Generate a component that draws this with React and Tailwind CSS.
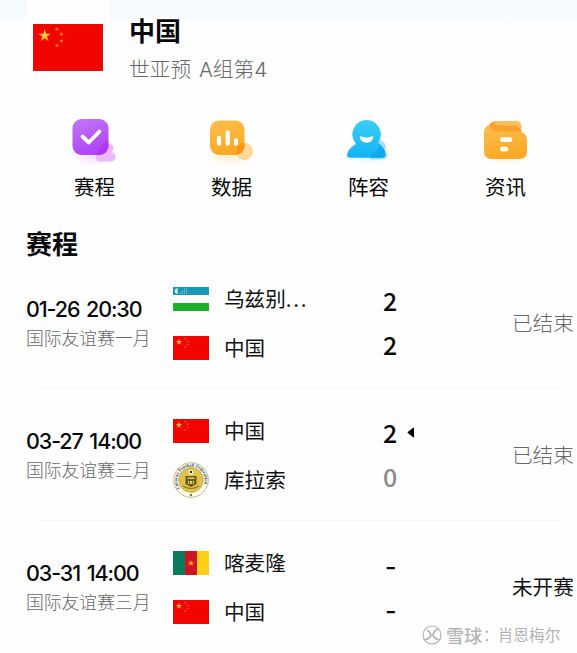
const STAR = '0,-1 0.225,-0.309 0.951,-0.309 0.363,0.118 0.588,0.809 0,0.382 -0.588,0.809 -0.363,0.118 -0.951,-0.309 -0.225,-0.309';

const ChinaFlag = ({ className }) => (
  <svg viewBox="0 0 72 48" preserveAspectRatio="none" className={className}>
    <rect width="72" height="48" fill="#f20500" />
    <rect x="0.5" y="0.5" width="71" height="47" fill="none" stroke="#c91a14" strokeOpacity="0.6" />
    <polygon points={STAR} fill="#ffc727" transform="translate(12 12) scale(6.6)" />
    <polygon points={STAR} fill="#f4932a" transform="translate(24.5 5.2) rotate(20) scale(2.3)" />
    <polygon points={STAR} fill="#f4932a" transform="translate(29.3 10.2) rotate(40) scale(2.3)" />
    <polygon points={STAR} fill="#f4932a" transform="translate(29.3 17.3) scale(2.3)" />
    <polygon points={STAR} fill="#f4932a" transform="translate(24.5 22) rotate(20) scale(2.3)" />
  </svg>
);

const UzbekFlag = ({ className }) => (
  <svg viewBox="0 0 36 24" preserveAspectRatio="none" className={className}>
    <rect width="36" height="24" fill="#fff" />
    <rect width="36" height="8" fill="#1899b5" />
    <rect y="16" width="36" height="8" fill="#1fae27" />
    <path d="M5.4 1.6a2.6 2.6 0 1 0 0 4.8 3 3 0 0 1 0-4.8z" fill="#fff" />
    <g fill="#b9e3ec">
      <circle cx="7.5" cy="6" r=".5" /><circle cx="9.5" cy="6" r=".5" /><circle cx="11.5" cy="6" r=".5" />
      <circle cx="13.5" cy="6" r=".5" /><circle cx="9.5" cy="4" r=".5" /><circle cx="11.5" cy="4" r=".5" />
      <circle cx="13.5" cy="4" r=".5" /><circle cx="11.5" cy="2" r=".5" /><circle cx="13.5" cy="2" r=".5" />
    </g>
  </svg>
);

const CameroonFlag = ({ className }) => (
  <svg viewBox="0 0 36 24" preserveAspectRatio="none" className={className}>
    <rect width="12" height="24" fill="#0b7d5c" />
    <rect x="12" width="12" height="24" fill="#ce1322" />
    <rect x="24" width="12" height="24" fill="#fcd116" />
    <polygon points={STAR} fill="#fba52c" transform="translate(18 12.3) scale(3.4)" />
  </svg>
);

const CuracaoBadge = ({ className }) => (
  <svg viewBox="0 0 36 36" className={className}>
    <defs>
      <path id="badge-ring" d="M7 26.500a13.700 13.700 0 1 1 22 0" />
    </defs>
    <circle cx="18" cy="18" r="17.300" fill="#fffef2" stroke="#a89d62" strokeWidth=".7" />
    <circle cx="18" cy="18" r="12.400" fill="#dfc24c" stroke="#b29a3c" strokeWidth=".6" />
    <text fontSize="4.800" fontWeight="700" fill="#45454f" fontFamily="Liberation Serif, serif">
      <textPath href="#badge-ring" textLength="55" lengthAdjust="spacingAndGlyphs">
        Curacao Football Federation
      </textPath>
    </text>
    <circle cx="18" cy="10.300" r="2.400" fill="#fff5c8" />
    <path d="M17 9h2v2h-2z" fill="#2c2817" />
    <path d="M12.500 14h11v8l-5.500 3-5.500-3z" fill="#6a5918" />
    <path d="M14.500 15.500h7v1.500h-7zM15 19h6v3h-6z" fill="#e6cd63" />
    <path d="M16 19.500h1v2h-1zM19 19.500h1v2h-1z" fill="#554610" />
    <path d="M10 24q8 5 16 0" fill="none" stroke="#8a7424" strokeWidth="1.200" />
    <circle cx="18" cy="33" r="1.200" fill="#77703f" />
  </svg>
);

const ScheduleIcon = () => (
  <svg viewBox="0 0 56 56" className="size-14">
    <defs>
      <linearGradient id="purple" x1="0" y1="0" x2=".35" y2="1">
        <stop offset="0" stopColor="#c07af6" />
        <stop offset="1" stopColor="#b044f8" />
      </linearGradient>
      <radialGradient id="purple-glow">
        <stop offset="0" stopColor="#c95cff" stopOpacity=".22" />
        <stop offset="1" stopColor="#c95cff" stopOpacity="0" />
      </radialGradient>
    </defs>
    <ellipse cx="27" cy="43" rx="24" ry="10" fill="url(#purple-glow)" />
    <path d="M38 28h6.500a3.800 3.800 0 0 1 2.500 6.500q-1 1.500 .8 2.500a4.600 4.600 0 0 1-2 8.500H34a4.500 4.500 0 0 1-2-8z" fill="#eeb6fc" transform="translate(-1.500 3)" />
    <rect x="5.500" y="6" width="36" height="36" rx="9" fill="url(#purple)" />
    <path d="M41.500 28v5a9 9 0 0 1-9 9h-2q-2-3 1.500-5 2.500-1 2.800-3.500 1.500-4.500 6.700-5.500z" fill="#b32cf0" opacity=".6" />
    <path d="M15.500 23.500l6.300 6L32.500 18.500" fill="none" stroke="#fff" strokeWidth="3.800" strokeLinecap="round" strokeLinejoin="round" />
  </svg>
);

const StatsIcon = () => (
  <svg viewBox="0 0 56 56" className="size-14">
    <defs>
      <linearGradient id="amber" x1="0" y1="0" x2=".3" y2="1">
        <stop offset="0" stopColor="#f9bf51" />
        <stop offset="1" stopColor="#fda923" />
      </linearGradient>
      <radialGradient id="amber-glow">
        <stop offset="0" stopColor="#ffba3c" stopOpacity=".22" />
        <stop offset="1" stopColor="#ffba3c" stopOpacity="0" />
      </radialGradient>
    </defs>
    <ellipse cx="27" cy="44" rx="24" ry="10" fill="url(#amber-glow)" />
    <circle cx="40.500" cy="38.500" r="8.500" fill="#fdd795" />
    <rect x="6" y="7.500" width="34.500" height="34.500" rx="9" fill="url(#amber)" />
    <path d="M40.500 30v3a9 9 0 0 1-9 9h1.500a8.500 8.500 0 0 1 7.500-12z" fill="#f98f16" opacity=".8" />
    <path d="M15 25v5.500M23.700 19.500v11M32 27.500v3" stroke="#fff" strokeWidth="4.300" strokeLinecap="round" />
  </svg>
);

const SquadIcon = () => (
  <svg viewBox="0 0 56 56" className="size-14">
    <defs>
      <linearGradient id="sky" x1="0" y1="0" x2="0" y2="1">
        <stop offset="0" stopColor="#3bcff6" />
        <stop offset="1" stopColor="#12b2f4" />
      </linearGradient>
      <radialGradient id="sky-glow">
        <stop offset="0" stopColor="#35c8ff" stopOpacity=".18" />
        <stop offset="1" stopColor="#35c8ff" stopOpacity="0" />
      </radialGradient>
    </defs>
    <ellipse cx="29" cy="43" rx="24" ry="9" fill="url(#sky-glow)" />
    <path d="M36 27a7.500 7.500 0 0 1 9 7q0 3-1.500 4.500 4 2.500 2.500 5-1.500 3-6 3H29V38z" fill="#a9ddf9" />
    <path d="M25.500 7a14.300 14.300 0 0 1 11.500 22.700q7.500 5 7.500 12 0 3-3.500 3H9.500q-3.500 0-3.500-2.500 0-5.500 9-11.500A14.300 14.300 0 0 1 25.500 7z" fill="url(#sky)" />
    <path d="M39 31.500q5.500 5 5.500 10.200 0 3-3.500 3H29q1-5 6-5.500z" fill="#0a9deb" opacity=".5" />
    <path d="M19.200 23.700q6 3 12.700 0-.7 5.500-6.300 5.500-5.600 0-6.400-5.500z" fill="#fff" stroke="#fff" strokeWidth="1" strokeLinejoin="round" />
  </svg>
);

const NewsIcon = () => (
  <svg viewBox="0 0 56 56" className="size-14">
    <ellipse cx="29" cy="44" rx="24" ry="8" fill="url(#amber-glow)" />
    <path d="M17 8h21.500a5 5 0 0 1 5 5v7H10q0-12 7-12z" fill="#fbbf62" />
    <path d="M11 12q1.500 6 7 6h22q9 1.500 9 9V38q0 8-8 8H14q-8 0-8-8V19.500Q6 13.500 11 12z" fill="url(#amber)" />
    <path d="M11 12q1-2.500 4.500-2.500 2 3 6 3h14q5 0 8 5.500v.3H18q-5.500 0-7-6.300z" fill="#fa9b25" opacity=".85" />
    <path d="M24.500 26.700h7.500M24.500 36.200h3.500" stroke="#fff" strokeWidth="4.800" strokeLinecap="round" />
  </svg>
);

const tabs = [
  { label: '赛程', Icon: ScheduleIcon },
  { label: '数据', Icon: StatsIcon },
  { label: '阵容', Icon: SquadIcon },
  { label: '资讯', Icon: NewsIcon },
];

const matches = [
  {
    date: '01-26 20:30',
    league: '国际友谊赛一月',
    status: '已结束',
    teams: [
      { name: '乌兹别', more: true, Flag: UzbekFlag, score: '2' },
      { name: '中国', Flag: ChinaFlag, score: '2' },
    ],
  },
  {
    date: '03-27 14:00',
    league: '国际友谊赛三月',
    status: '已结束',
    teams: [
      { name: '中国', Flag: ChinaFlag, score: '2', winner: true },
      { name: '库拉索', Flag: CuracaoBadge, score: '0', round: true, lost: true },
    ],
  },
  {
    date: '03-31 14:00',
    league: '国际友谊赛三月',
    status: '未开赛',
    upcoming: true,
    teams: [
      { name: '喀麦隆', Flag: CameroonFlag },
      { name: '中国', Flag: ChinaFlag },
    ],
  },
];

const Score = ({ team }) => (
  <div className="flex h-11 items-center">
    {team.score ? (
      <span className={`text-[25px] leading-none font-medium ${team.lost ? 'text-[#8b8b8d]' : 'text-[#050507]'}`}>{team.score}</span>
    ) : (
      <span className="ml-[2px] pt-[6px] font-['Inter'] text-[25px] leading-[30px] font-medium">-</span>
    )}
    {team.winner && (
      <svg viewBox="0 0 7 11" className="ml-[10px] h-[11px] w-[7px]">
        <path d="M6.500 1v9L.8 5.500z" fill="#000" stroke="#000" strokeLinejoin="round" />
      </svg>
    )}
  </div>
);

const MatchRow = ({ match }) => (
  <div className="flex h-[132px] items-center pl-[26px]">
    <div className="w-[147px]">
      <p className="pt-px font-['Inter'] text-[21.5px] leading-[27px] font-medium tracking-[-1.1px] [word-spacing:2px] whitespace-nowrap text-[#09090c]">{match.date}</p>
      <p className="text-[17.8px] leading-[28px] font-light whitespace-nowrap text-[#68686b]">{match.league}</p>
    </div>
    <div className="w-[210px]">
      {match.teams.map(({ name, more, Flag, round }, i) => (
        <div key={i} className="flex h-[49px] items-center">
          <Flag className={round ? 'size-9' : 'h-6 w-9'} />
          <span className="ml-[15px] pb-px text-[20.6px] leading-none text-[#111114]">
            {name}
            {more && <span className="tracking-[1.8px]">...</span>}
          </span>
        </div>
      ))}
    </div>
    <div className="w-[129px] pb-[2px]">
      {match.teams.map((team, i) => <Score key={i} team={team} />)}
    </div>
    <span className={`pb-[2px] text-[20.6px] whitespace-nowrap ${match.upcoming ? 'text-[#111114]' : 'font-light text-[#68686b]'}`}>{match.status}</span>
  </div>
);

const App = () => (
  <div className="relative h-[653px] w-[577px] overflow-hidden bg-[#fefefe] bg-linear-to-b from-[#f5fafe] from-[10px] to-[#fefefe] to-[26px] font-['Noto_Sans_CJK_SC',sans-serif] text-[#09090c]">
    <header className="flex h-[95px] pl-[27px]">
      <div className="flex h-[94px] w-[82px] items-center justify-center bg-[#fefefe] pr-px">
        <ChinaFlag className="h-[47px] w-[70px]" />
      </div>
      <div className="ml-[20px] pt-[11px]">
        <h1 className="text-[26px] leading-[38px] font-bold">中国</h1>
        <p className="pt-[2px] font-['Inter','Noto_Sans_CJK_SC',sans-serif] text-[20.7px] leading-[38px] font-light [word-spacing:2px] text-[#68686b]">世亚预 A组第4</p>
      </div>
    </header>

    <nav className="flex pt-[18px] pl-[26px]">
      {tabs.map(({ label, Icon }) => (
        <div key={label} className="flex w-[137px] flex-col items-center">
          <Icon />
          <span className="text-[20.5px] leading-[34px]">{label}</span>
        </div>
      ))}
    </nav>

    <h2 className="mt-[22px] ml-[26px] h-8 text-[26px] leading-[36px] font-bold">赛程</h2>

    {matches.map((match, i) => (
      <div key={match.date}>
        {i > 0 && <div className="mr-[14px] -mt-px ml-[38px] h-px bg-[#f6f6f7]" />}
        <MatchRow match={match} />
      </div>
    ))}

    {/* Watermark */}
    <div className="absolute top-[625px] left-[422px] flex items-center gap-[4px] whitespace-nowrap text-[#b4b4b6]">
      <svg viewBox="0 0 20 20" className="size-5" fill="none" stroke="currentColor">
        <circle cx="10" cy="10" r="9" strokeWidth="1.200" />
        <path d="M5.500 5.500q2.500 1 3.500 4.500-1 3.500-5.500 4.500M15.500 4q-4 2-4.500 6 1 3.500 5 4.500" strokeWidth="1.800" strokeLinecap="round" />
      </svg>
      <span className="text-[18px] leading-5 font-medium">雪球</span>
      <span className="-ml-[3px] text-[15.700px] leading-5"><span className="tracking-[-1px]">：</span>肖恩梅尔</span>
    </div>
  </div>
);

export default App;
